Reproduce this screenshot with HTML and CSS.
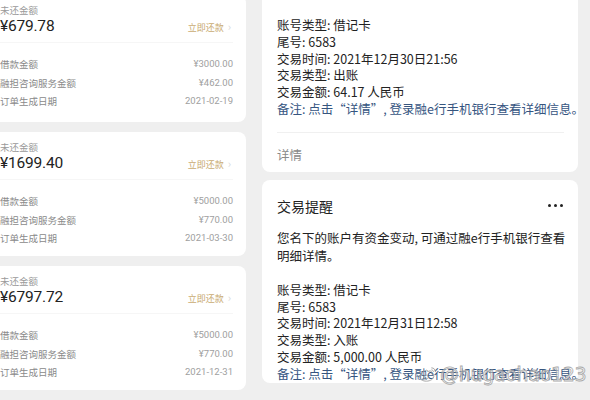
FILE: index.html
```html
<!DOCTYPE html>
<html lang="zh-CN">
<head>
    <meta charset="UTF-8">
    <meta name="viewport" content="width=device-width, initial-scale=1.0">
    <title>账单与交易提醒</title>
    <link rel="stylesheet" href="styles.css">
</head>
<body>
    <div class="page">
        <div class="bills">
            <div class="bill first">
                <div class="bill-label">未还金额</div>
                <div class="bill-top">
                    <span class="bill-amount">¥679.78</span>
                    <span class="repay">立即还款 <i class="chev">&#8250;</i></span>
                </div>
                <div class="bill-rows">
                    <div class="row"><span>借款金额</span><span>¥3000.00</span></div>
                    <div class="row"><span>融担咨询服务金额</span><span>¥462.00</span></div>
                    <div class="row"><span>订单生成日期</span><span>2021-02-19</span></div>
                </div>
            </div>
            <div class="bill">
                <div class="bill-label">未还金额</div>
                <div class="bill-top">
                    <span class="bill-amount">¥1699.40</span>
                    <span class="repay">立即还款 <i class="chev">&#8250;</i></span>
                </div>
                <div class="bill-rows">
                    <div class="row"><span>借款金额</span><span>¥5000.00</span></div>
                    <div class="row"><span>融担咨询服务金额</span><span>¥770.00</span></div>
                    <div class="row"><span>订单生成日期</span><span>2021-03-30</span></div>
                </div>
            </div>
            <div class="bill">
                <div class="bill-label">未还金额</div>
                <div class="bill-top">
                    <span class="bill-amount">¥6797.72</span>
                    <span class="repay">立即还款 <i class="chev">&#8250;</i></span>
                </div>
                <div class="bill-rows">
                    <div class="row"><span>借款金额</span><span>¥5000.00</span></div>
                    <div class="row"><span>融担咨询服务金额</span><span>¥770.00</span></div>
                    <div class="row"><span>订单生成日期</span><span>2021-12-31</span></div>
                </div>
            </div>
        </div>

        <div class="notices">
            <div class="notice first">
                <div class="lines">
                    <p>账号类型: 借记卡</p>
                    <p>尾号: 6583</p>
                    <p>交易时间: 2021年12月30日21:56</p>
                    <p>交易类型: 出账</p>
                    <p>交易金额: 64.17 人民币</p>
                    <p class="remark">备注: 点击“详情”, 登录融e行手机银行查看详细信息。</p>
                </div>
                <div class="more">详情</div>
            </div>
            <div class="notice">
                <div class="notice-head">
                    <span class="notice-title">交易提醒</span>
                    <span class="dots"><i></i><i></i><i></i></span>
                </div>
                <p class="intro">您名下的账户有资金变动, 可通过融e行手机银行查看<br>明细详情。</p>
                <div class="lines">
                    <p>账号类型: 借记卡</p>
                    <p>尾号: 6583</p>
                    <p>交易时间: 2021年12月31日12:58</p>
                    <p>交易类型: 入账</p>
                    <p>交易金额: 5,000.00 人民币</p>
                    <p class="remark">备注: 点击“详情”, 登录融e行手机银行查看详细信息。</p>
                </div>
            </div>
        </div>
    </div>

    <div class="mark">
        <svg class="mark-logo" viewBox="0 0 24 20" width="20" height="17">
            <path d="M10 5c-4 1-8 5-8 8 0 3 4 5 8 5 5 0 9-3 9-6 0-2-2-3-3-3 1-2 0-4-3-3-1 0-1 1-1 1 0-1-1-3-2-2z" fill="none" stroke="#999" stroke-width="1.2"/>
            <ellipse cx="9.5" cy="13" rx="3" ry="2.4" fill="none" stroke="#999" stroke-width="1"/>
            <path d="M16 2c3 0 5 2 5 5M16 4.5c1.5 0 2.5 1 2.5 2.5" fill="none" stroke="#999" stroke-width="1.2"/>
        </svg>
        <span class="mark-text">@hugaohao123</span>
    </div>
</body>
</html>
```

FILE: styles.css
```css
body {
    margin: 0;
    background: #efefef;
    font-family: "Noto Sans CJK SC", "Noto Sans", sans-serif;
    color: #222;
    overflow: hidden;
}
p {
    margin: 0;
}
.page {
    display: flex;
    align-items: flex-start;
    width: 590px;
    height: 400px;
    overflow: hidden;
}

/* left column: loan bills */
.bills {
    width: 258px;
    margin-left: -12px;
    flex-shrink: 0;
    display: flex;
    flex-direction: column;
    gap: 10px;
}
.bill {
    background: #fff;
    border-radius: 8px;
    height: 124px;
    box-sizing: border-box;
    padding: 9px 13px 9px 12px;
}
.bill.first {
    margin-top: -5px;
    height: 127px;
}
.bill-label {
    font-size: 9.5px;
    line-height: 13px;
    color: #9a9a9a;
}
.bill-top {
    display: flex;
    justify-content: space-between;
    align-items: center;
    height: 18px;
    padding-bottom: 7px;
    border-bottom: 1px solid #f6f6f6;
}
.bill-amount {
    font-family: Roboto, "Noto Sans", sans-serif;
    font-size: 15.5px;
    color: #222;
    letter-spacing: -0.2px;
}
.repay {
    font-size: 9px;
    color: #c9ab72;
    margin-right: 2px;
}
.chev {
    font-style: normal;
    color: #d8d8d8;
    font-size: 11px;
    margin-left: 2px;
}
.bill-rows {
    padding-top: 12px;
}
.row {
    display: flex;
    justify-content: space-between;
    font-size: 9.5px;
    line-height: 18.5px;
    color: #8a8a8a;
}
.row span:last-child {
    font-family: Roboto, "Noto Sans", sans-serif;
    color: #a0a0a0;
}

/* right column: bank notices */
.notices {
    width: 316px;
    margin-left: 16px;
    flex-shrink: 0;
    display: flex;
    flex-direction: column;
    gap: 8px;
}
.notice {
    background: #fff;
    border-radius: 8px;
    padding: 16px 14px 0 15px;
}
.notice.first {
    margin-top: -10px;
    padding-top: 27px;
}
.lines p {
    font-size: 12.5px;
    line-height: 16.8px;
    white-space: nowrap;
}
.lines .remark {
    color: #36557f;
}
.notice.first .lines {
    padding-bottom: 14px;
    border-bottom: 1px solid #f0f0f0;
}
.more {
    font-size: 12.5px;
    line-height: 17px;
    color: #8a8a8a;
    padding: 13px 0 9px;
}
.notice-head {
    display: flex;
    justify-content: space-between;
    align-items: center;
    height: 20px;
}
.notice-title {
    font-size: 14px;
}
.dots {
    display: flex;
    gap: 3px;
    margin-right: 1px;
}
.dots i {
    width: 3px;
    height: 3px;
    border-radius: 50%;
    background: #222;
}
.intro {
    font-size: 12.5px;
    line-height: 18px;
    margin-top: 13px;
    margin-bottom: 17px;
    white-space: nowrap;
}

/* watermark over the bottom-right corner */
.mark {
    position: absolute;
    left: 418px;
    top: 363px;
    display: flex;
    align-items: center;
    gap: 2px;
    opacity: 0.85;
}
.mark-text {
    font-family: "DejaVu Sans", sans-serif;
    font-size: 19px;
    color: rgba(255, 255, 255, 0.6);
    -webkit-text-stroke: 0.8px #9a9a9a;
    letter-spacing: -0.3px;
}
```
